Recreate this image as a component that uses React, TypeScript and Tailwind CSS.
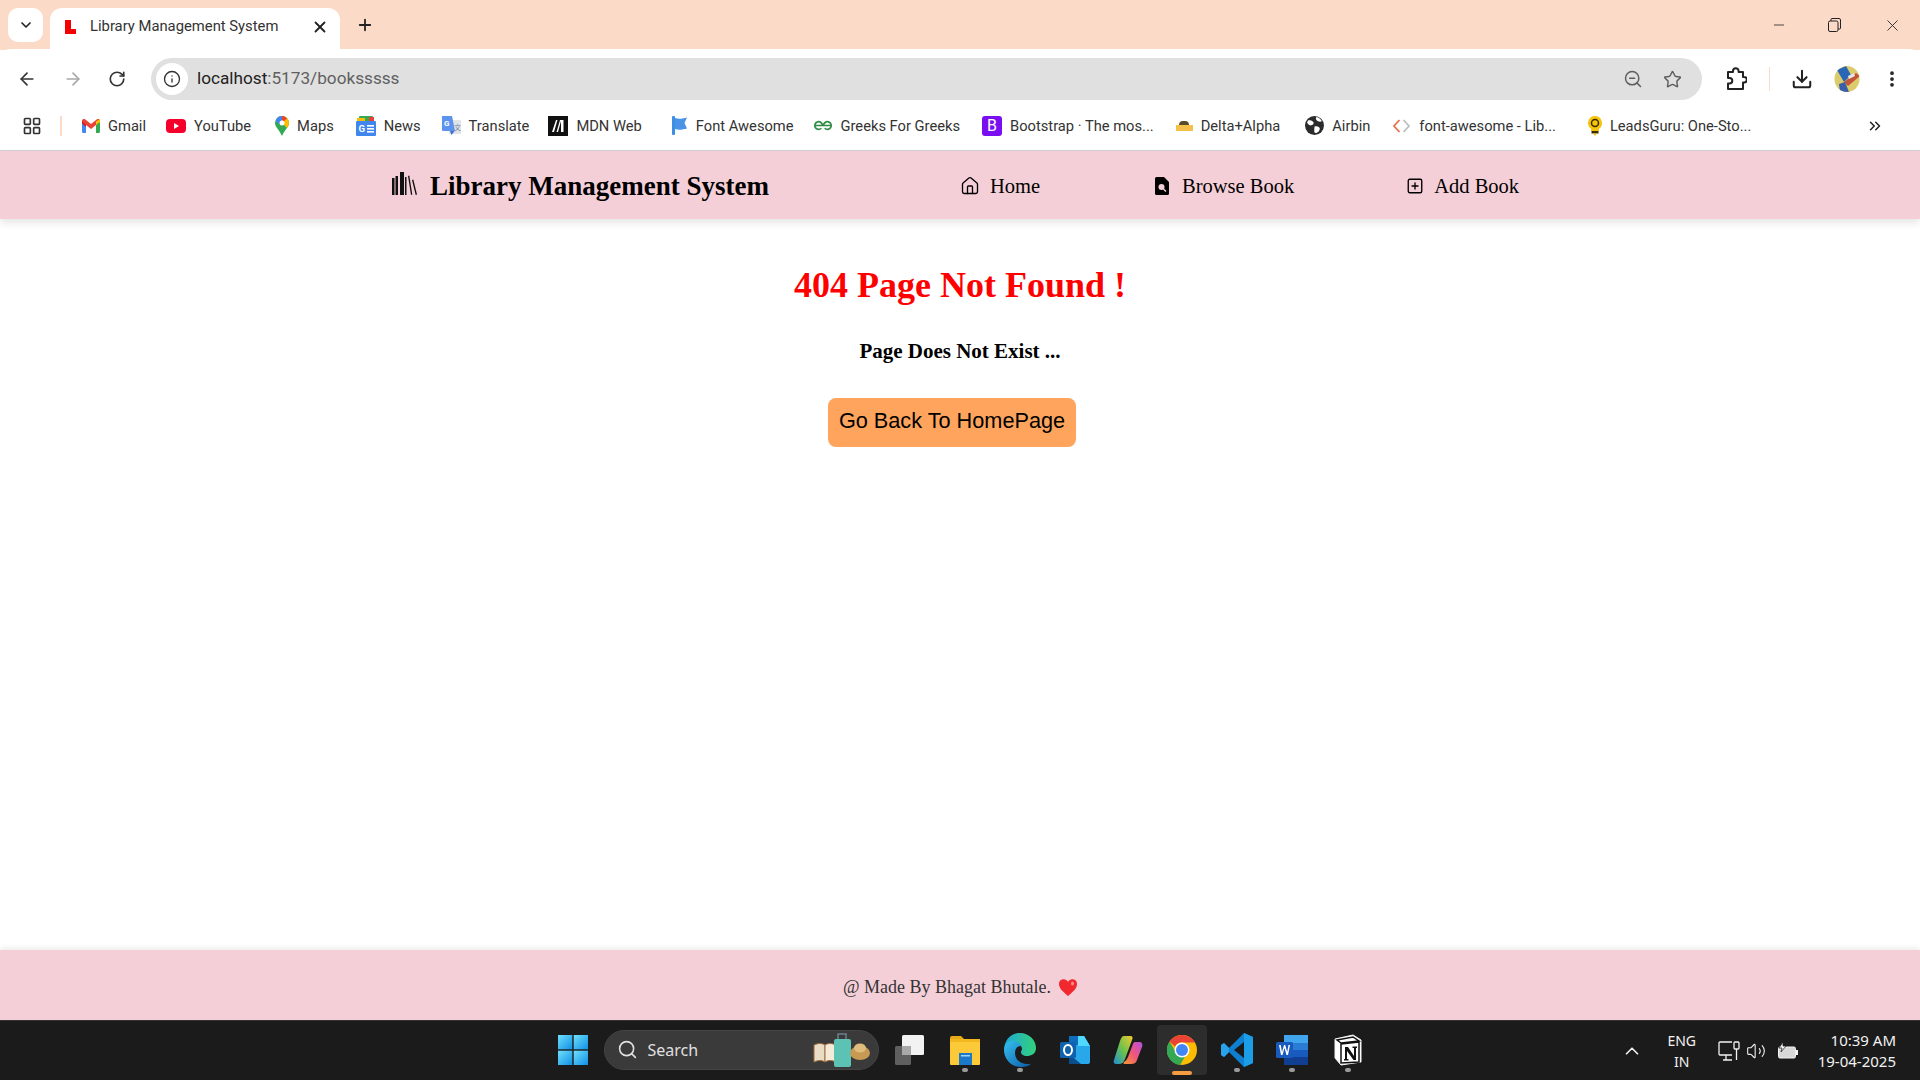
import React from "react";
import { ArrowLeft, ArrowRight, RotateCw, Info, ZoomOut, Star, Download, EllipsisVertical, X, Plus, ChevronDown, Minus, House, SquarePlus, ChevronsRight, Search, ChevronUp, Volume2, LayoutGrid } from "lucide-react";

const Gmail = () => (
  <svg width="18" height="14" viewBox="0 0 18 14"><path d="M0 2v10.5A1.5 1.5 0 0 0 1.5 14H4V6z" fill="#4285f4"/><path d="M18 2v10.5a1.5 1.5 0 0 1-1.5 1.5H14V6z" fill="#34a853"/><path d="M0 1.5 4 5v3L0 4.5z" fill="#c5221f"/><path d="M0 2C0 0 2-.5 3 .3L9 5l6-4.700C16-.5 18 0 18 2l-4 4-5 4-5-4z" fill="#ea4335"/><path d="M14 2.500 18 0v3l-4 3z" fill="#fbbc04"/></svg>
);
const YouTube = () => (
  <svg width="20" height="14" viewBox="0 0 20 14"><rect width="20" height="14" rx="4" fill="#f5002b"/><path d="M8 4l5 3-5 3z" fill="#fff"/></svg>
);
const MapsI = () => (
  <svg width="14" height="20" viewBox="0 0 14 20"><path d="M7 0a7 7 0 0 1 7 7c0 4-4.500 7-7 13C4.500 14 0 11 0 7a7 7 0 0 1 7-7z" fill="#34a853"/><path d="M2 2 12 12c1-1.500 2-3 2-5A7 7 0 0 0 7 0C5 0 3.300.8 2 2z" fill="#fbbc04"/><path d="M2 2A7 7 0 0 1 7 0v4.500L3.500 8 1 5z" fill="#4285f4"/><path d="M7 0c2 0 4 1 5 2.500L8.800 5.300 7 4z" fill="#ea4335"/><circle cx="7" cy="7" r="2.500" fill="#fff"/></svg>
);
const NewsI = () => (
  <svg width="20" height="20" viewBox="0 0 20 20"><rect x="3" y="0" width="14" height="6" rx="1" fill="#34a853"/><rect x="13" y="1" width="5" height="6" fill="#ea4335"/><rect x="1" y="2" width="8" height="4" fill="#fbbc04"/><rect x="0" y="5" width="20" height="15" rx="1" fill="#3f87ef"/><text x="2.500" y="16" fontSize="9.500" fontWeight="700" fill="#fff" fontFamily="Roboto, sans-serif">G</text><rect x="11" y="9" width="7" height="1.600" fill="#fff"/><rect x="11" y="12" width="7" height="1.600" fill="#fff"/><rect x="11" y="15" width="7" height="1.600" fill="#fff"/></svg>
);
const TranslateI = () => (
  <svg width="20" height="20" viewBox="0 0 20 20"><rect x="8" y="4" width="12" height="14" rx="1" fill="#dfe3ea"/><path d="M1 0h10l3 15H2a1 1 0 0 1-1-1z" fill="#5b93ee"/><path d="M9 15l1.500 4 3-4z" fill="#3f6fc4"/><text x="3" y="10" fontSize="8" fontWeight="700" fill="#fff" fontFamily="Roboto, sans-serif">G</text><text x="13" y="14" fontSize="7" fill="#7b8794" fontFamily="Noto Sans CJK SC, sans-serif">文</text></svg>
);
const MdnI = () => (
  <div className="w-[20px] h-[20px] bg-[#111111] flex items-center justify-center">
    <svg width="14" height="14" viewBox="0 0 14 14"><path d="M1 13 5 1h1.500L3 13zM5.500 13 9 1h1.300L7 13zM10 13V1h2.500v12z" fill="#fff"/></svg>
  </div>
);
const FontAwesomeI = () => (
  <svg width="16" height="19" viewBox="0 0 16 19"><rect x="0" y="0" width="3" height="19" rx="1" fill="#3d8fe4"/><path d="M3 2c4 1.500 8 .5 12-.5l-2.500 5.500 2.500 5.500c-4 1-8 2-12 .5z" fill="#4a94e8"/></svg>
);
const GfgI = () => (
  <svg width="20" height="11" viewBox="0 0 18 10" fill="none" stroke="#2f8d46" strokeWidth="1.500"><path d="M1 5h7.500A3.500 3.500 0 1 0 7.500 7.500"/><path d="M17 5H9.500A3.500 3.500 0 1 1 10.500 7.500"/></svg>
);
const BootstrapI = () => (
  <div className="w-[20px] h-[20px] rounded-[3px] bg-[#7a0ef0] text-white text-[16px] leading-[20px] text-center font-['Roboto',sans-serif]">B</div>
);
const DeltaI = () => (
  <div className="w-[17px] h-[12px] flex flex-col items-center justify-center">
    <div className="w-[10px] h-[4px] rounded-t-full bg-[#5a4a2a]"></div>
    <div className="w-[17px] h-[6px] bg-[#f5c04a]"></div>
  </div>
);
const AirbinI = () => (
  <svg width="19" height="19" viewBox="0 0 18 18"><circle cx="9" cy="9" r="9" fill="#2b2b2b"/><path d="M3 4c2 0 4 0 5 2S6 9 5 9 2 7 2 6zM9 10c2-1 5 0 5 2s-2 4-4 4-1-4-1-6zM11 1c2 .5 4 2 5 4-2 1-4 0-5-1s-1-2 0-3z" fill="#fff"/></svg>
);
const CodeI = () => (
  <svg width="19" height="14" viewBox="0 0 18 14" fill="none" strokeWidth="1.800"><path d="M7 1 1.500 7 7 13" stroke="#e8704a"/><path d="M11 1l5.500 6-5.500 6" stroke="#bdbdbd"/></svg>
);
const LeadsI = () => (
  <svg width="14" height="20" viewBox="0 0 14 20"><path d="M7 0a7 7 0 0 1 4 12.700V15H3v-2.300A7 7 0 0 1 7 0z" fill="#f6c40c"/><circle cx="7" cy="7" r="3.500" fill="none" stroke="#3a2c00" strokeWidth="1.500"/><rect x="3.500" y="15" width="7" height="2.500" fill="#3a2c00"/><path d="M5 17.500h4L7 20z" fill="#f6c40c"/></svg>
);
const Profile = () => (
  <svg width="26" height="26" viewBox="0 0 26 26"><clipPath id="pc"><ellipse cx="13" cy="13" rx="12.500" ry="13"/></clipPath><g clipPath="url(#pc)"><rect width="26" height="26" fill="#dccb6b"/><path d="M3 4l9-4 5 9-7 7z" fill="#2a66b8"/><path d="M10 16l12-9 4 3-12 10z" fill="#c2543b"/><path d="M5 18l6-2 4 10H6z" fill="#3b5ea8"/><path d="M14 10l6-3 1 3-6 3z" fill="#e8e6dc"/></g></svg>
);
const Extension = () => (
  <svg className="ml-[23px]" width="22" height="24" viewBox="0 0 22 24" fill="none" stroke="#222222" strokeWidth="2" strokeLinejoin="round"><path d="M3 5h5V4a2.800 2.800 0 0 1 5.600 0v1H18v5h1a2.800 2.800 0 0 1 0 5.600h-1V22H3v-5.500h1.500a2.800 2.800 0 0 0 0-5.600H3z"/></svg>
);

const Windows = () => (
  <svg width="30" height="30" viewBox="0 0 30 30"><defs><linearGradient id="wg" x1="0" y1="0" x2="1" y2="1"><stop offset="0" stopColor="#6fe0fb"/><stop offset="1" stopColor="#0f8fe6"/></linearGradient></defs><rect width="14.300" height="14.300" x="0" y="0" fill="url(#wg)"/><rect width="14.300" height="14.300" x="15.700" y="0" fill="url(#wg)"/><rect width="14.300" height="14.300" x="0" y="15.700" fill="url(#wg)"/><rect width="14.300" height="14.300" x="15.700" y="15.700" fill="url(#wg)"/></svg>
);
const SearchArt = () => (
  <svg width="58" height="34" viewBox="0 0 58 34"><path d="M1 12c4-2 8-2 11 0v17c-3-2-7-2-11 0z" fill="#e8dcc4" stroke="#a06a3c"/><path d="M23 12c-4-2-8-2-11 0v17c3-2 7-2 11 0z" fill="#f3ead8" stroke="#a06a3c"/><rect x="21" y="6" width="17" height="28" rx="2" fill="#5cc3b4"/><path d="M25 6V1h8v5" fill="none" stroke="#6e7f8c" strokeWidth="1.500"/><ellipse cx="47" cy="20" rx="10" ry="7" fill="#c69a52"/><ellipse cx="47" cy="15" rx="6" ry="4.500" fill="#e0bd7c"/></svg>
);
const TaskView = () => (
  <svg width="32" height="32" viewBox="0 0 32 32"><rect x="8" y="1" width="22" height="20" rx="1.500" fill="#f2f2f2"/><rect x="1" y="12" width="16" height="19" rx="1.500" fill="#5f5f5f"/><rect x="8" y="12" width="9" height="9" fill="#a8a8a8"/></svg>
);
const Explorer = () => (
  <svg width="32" height="30" viewBox="0 0 32 30"><path d="M1 3a2 2 0 0 1 2-2h9l3 3H1z" fill="#e8a919"/><rect x="1" y="4" width="30" height="26" rx="1" fill="#fcc938"/><rect x="1" y="4" width="30" height="3" fill="#f3b81f"/><rect x="10" y="18" width="13" height="12" fill="#1c78c8"/><rect x="12" y="20" width="9" height="1.500" fill="#9fd4f5"/></svg>
);
const Edge = () => (
  <svg width="32" height="34" viewBox="0 0 32 34"><defs><linearGradient id="eg" x1="0" y1="0" x2="1" y2="1"><stop offset="0" stopColor="#35c1f1"/><stop offset="1" stopColor="#0c59a4"/></linearGradient><linearGradient id="eg2" x1="0" y1="0" x2="1" y2="0"><stop offset="0" stopColor="#1fa8d8"/><stop offset="1" stopColor="#33d17a"/></linearGradient></defs><path d="M16 0c9 0 16 7 16 15 0 6-5 8-9 8s-6-2-6-4c0-1 1-2 1-3 0-4-5-7-10-6C2 11 0 15 0 18 0 8 6 0 16 0z" fill="url(#eg2)"/><path d="M0 17c0-5 4-9 9-9 4 0 7 2 8 5-4 0-6 3-6 7 0 6 5 11 13 11 2 0 3 0 4-1-3 3-7 4-11 4C7 34 0 26 0 17z" fill="url(#eg)"/></svg>
);
const Outlook = () => (
  <svg width="32" height="32" viewBox="0 0 32 32"><path d="M10 2h15l6 10v16a2 2 0 0 1-2 2H10z" fill="#28a8ea"/><path d="M10 2h9v9h-9z" fill="#0f6cbd"/><path d="M19 2h6l6 10-12 0z" fill="#50d9ff"/><path d="M10 20l12 10H10z" fill="#0a4d8c"/><rect x="1" y="8" width="16" height="16" rx="1.500" fill="#0f62ae"/><ellipse cx="9" cy="16" rx="4" ry="5" fill="none" stroke="#fff" strokeWidth="2"/></svg>
);
const Copilot = () => (
  <svg width="30" height="30" viewBox="0 0 30 30"><defs><linearGradient id="cg1" x1="1" y1="0" x2="0" y2="1"><stop offset="0" stopColor="#f6c731"/><stop offset=".5" stopColor="#6cc24a"/><stop offset="1" stopColor="#1e8fd8"/></linearGradient><linearGradient id="cg2" x1="1" y1="0" x2="0" y2="1"><stop offset="0" stopColor="#b44fe0"/><stop offset=".5" stopColor="#f0567a"/><stop offset="1" stopColor="#f59a30"/></linearGradient></defs><path d="M11 1h6c3 0 3 2 2 4l-7 19c-1 3-3 5-6 5H3c-2 0-3-2-2-4L7 6c1-3 2-5 4-5z" fill="url(#cg1)"/><path d="M22 7h4c3 0 4 2 3 5l-5 13c-1 3-3 4-6 4h-6c-2 0-2-1-1-2 2-1 3-3 4-5l5-13c0-1 1-2 2-2z" fill="url(#cg2)"/></svg>
);
const Chrome = () => (
  <svg width="30" height="30" viewBox="0 0 30 30"><circle cx="15" cy="15" r="15" fill="#fbbc04"/><path d="M15 0a15 15 0 0 1 13 7.500H15A7.500 7.500 0 0 0 8 11.500L2.500 6.500A15 15 0 0 1 15 0z" fill="#ea4335"/><path d="M2.500 6.500 9 17.500a7 7 0 0 0 9 4L13 30A15 15 0 0 1 2.500 6.500z" fill="#34a853"/><circle cx="15" cy="15" r="7.500" fill="#fff"/><circle cx="15" cy="15" r="6" fill="#4285f4"/></svg>
);
const VSCode = () => (
  <svg width="32" height="34" viewBox="0 0 32 34"><path d="M23 0 32 4v26l-9 4L8 19l-5 5-3-2V12l3-2 5 5z" fill="#0e7fd1"/><path d="M23 9 13 17l10 8z" fill="#1a1a1a"/><path d="M3 10l5 5 0 4-5 5-3-2V12z" fill="#29a3ec"/><path d="M23 0l9 4v26l-9 4z" fill="#1b9de8"/></svg>
);
const Word = () => (
  <svg width="32" height="30" viewBox="0 0 32 30"><rect x="8" y="0" width="24" height="30" rx="1.500" fill="#2b7cd3"/><rect x="8" y="0" width="24" height="8" fill="#41a5ee"/><rect x="8" y="15" width="24" height="8" fill="#185abd"/><rect x="8" y="22" width="24" height="8" fill="#103f91"/><rect x="0" y="7" width="17" height="16" rx="1.500" fill="#185abd"/><path d="M3 10l2 10h1.500L8.500 13l2 7H12l2-10h-1.500l-1.300 7-2-7H8l-2 7-1.300-7z" fill="#fff"/></svg>
);
const Notion = () => (
  <svg width="30" height="32" viewBox="0 0 30 32"><path d="M2 5 20 1l8 5v22l-20 3-6-7z" fill="#fff" stroke="#f5f5f5" strokeWidth="1"/><path d="M4 6 20 3l6 4-18 2zM8 10l18-2v20L8 29z" fill="#fff" stroke="#111" strokeWidth="1.500"/><path d="M12 13h3l6 9v-8h-1.500v-1.500H24V14h-1v12h-2.500L14 17v8h1.500v1.500H11V25h1z" fill="#111"/></svg>
);

const bookmarks = [
  { icon: <Gmail />, label: "Gmail", cls: "ml-[20px]" },
  { icon: <YouTube />, label: "YouTube", cls: "ml-[20px]" },
  { icon: <MapsI />, label: "Maps", cls: "ml-[24px]" },
  { icon: <NewsI />, label: "News", cls: "ml-[22px]" },
  { icon: <TranslateI />, label: "Translate", cls: "ml-[20px]" },
  { icon: <MdnI />, label: "MDN Web", cls: "ml-[19px]" },
  { icon: <FontAwesomeI />, label: "Font Awesome", cls: "ml-[30px]" },
  { icon: <GfgI />, label: "Greeks For Greeks", cls: "ml-[19px]" },
  { icon: <BootstrapI />, label: "Bootstrap · The mos...", cls: "ml-[22px]" },
  { icon: <DeltaI />, label: "Delta+Alpha", cls: "ml-[22px]" },
  { icon: <AirbinI />, label: "Airbin", cls: "ml-[25px]" },
  { icon: <CodeI />, label: "font-awesome - Lib...", cls: "ml-[22px]" },
  { icon: <LeadsI />, label: "LeadsGuru: One-Sto...", cls: "ml-[32px]" },
];

const Tray = () => (
  <div className="flex items-center justify-end text-[#f2f2f2] font-['Noto_Sans',sans-serif] pr-[24px]">
    <ChevronUp size={22} strokeWidth={1.8} />
    <div className="ml-[17px] w-[44px] text-center text-[14px] leading-[21px]"><div>ENG</div><div>IN</div></div>
    <svg className="ml-[14px]" width="22" height="22" viewBox="0 0 22 22" fill="none" stroke="#f2f2f2" strokeWidth="1.300"><path d="M14 2H2a1 1 0 0 0-1 1v11a1 1 0 0 0 1 1h12"/><path d="M5 20h9M8 15v5"/><rect x="16" y="2" width="5" height="7" rx="1"/><path d="M18.500 9v11"/></svg>
    <Volume2 className="ml-[6px]" size={20} strokeWidth={1.3} />
    <svg className="ml-[11px]" width="21" height="18" viewBox="0 0 21 18" fill="#f2f2f2"><path d="M3 5h14a1.500 1.500 0 0 1 1.500 1.500v8A1.500 1.500 0 0 1 17 16H3a1.500 1.500 0 0 1-1.500-1.500v-8A1.500 1.500 0 0 1 3 5z" fill="#d8d8d8" stroke="#f2f2f2"/><rect x="19" y="8" width="2" height="5"/><path d="M6 0 2 6h3l-1 4 5-6H6z" stroke="#1a1a1a" strokeWidth=".7"/></svg>
    <div className="ml-[20px] text-right text-[15px] leading-[21px]"><div>10:39 AM</div><div>19-04-2025</div></div>
  </div>
);

export default function App() {
  return (
    <div className="h-[1080px] w-full flex flex-col overflow-hidden bg-white">
      {/* Tab strip */}
      <div className="h-[50px] shrink-0 bg-[#fcdac8] flex font-['Roboto',sans-serif]">
        <div className="mt-[8px] ml-[8px] w-[35px] h-[34px] rounded-[10px] bg-white flex items-center justify-center text-[#222222]">
          <ChevronDown size={16} strokeWidth={2.5} />
        </div>
        <div className="ml-[7px] mt-[8px] w-[290px] h-[42px] bg-white rounded-t-[12px] flex items-center pl-[14px] pr-[11px] pb-[5px]">
          <svg width="16" height="16" viewBox="0 0 16 16"><path d="M1 1h6v9h5v5H1z" fill="#f40000"/></svg>
          <span className="ml-[10px] text-[14.800px] text-[#333333] whitespace-nowrap">Library Management System</span>
          <X className="ml-auto text-[#222222]" size={18} strokeWidth={2.4} />
        </div>
        <div className="ml-[16px] mt-[9px] h-[32px] flex items-center text-[#222222]"><Plus size={18} strokeWidth={2.4} /></div>
        <div className="ml-auto flex items-start text-[#222222]">
          <div className="w-[50px] h-[50px] flex items-center justify-center"><Minus size={16} strokeWidth={1.2} /></div>
          <div className="w-[60px] h-[50px] flex items-center justify-center">
            <svg width="13" height="14" viewBox="0 0 13 14" fill="none" stroke="#222222" strokeWidth="1"><rect x=".5" y="3" width="9.500" height="10.500" rx="1.500"/><path d="M3 3V1.500A1 1 0 0 1 4 .5h7a1.500 1.500 0 0 1 1.500 1.500v8a1 1 0 0 1-1 1H10"/></svg>
          </div>
          <div className="w-[56px] h-[50px] flex items-center justify-center"><X size={19} strokeWidth={1.1} /></div>
        </div>
      </div>
      {/* Toolbar */}
      <div className="h-[58px] shrink-0 bg-white rounded-t-[10px] -mt-px pt-[2px] flex items-center text-[#333333] font-['Roboto',sans-serif]">
        <ArrowLeft className="ml-[17px]" size={20} strokeWidth={2} />
        <ArrowRight className="ml-[26px] text-[#a8a8a8]" size={20} strokeWidth={2} />
        <RotateCw className="ml-[25px]" size={18} strokeWidth={2.2} />
        <div className="ml-[25px] w-[1551px] h-[42px] rounded-full bg-[#e0e0e0] flex items-center pl-[5px] pr-[20px]">
          <div className="w-[32px] h-[32px] rounded-full bg-white flex items-center justify-center"><Info size={18} strokeWidth={1.8} /></div>
          <span className="ml-[9px] text-[17.200px]"><span className="text-[#222222]">localhost</span><span className="text-[#5f5f5f]">:5173/booksssss</span></span>
          <ZoomOut className="ml-auto text-[#5f5f5f]" size={20} strokeWidth={1.8} />
          <Star className="ml-[20px] text-[#5f5f5f]" size={19} strokeWidth={1.8} />
        </div>
        <Extension />
        <div className="ml-[22px] w-px h-[24px] bg-[#fcdac8]"></div>
        <Download className="ml-[21px] text-[#222222]" size={22} strokeWidth={2.2} />
        <div className="ml-[21px]"><Profile /></div>
        <EllipsisVertical className="ml-[22px] text-[#222222]" size={20} strokeWidth={2.5} />
      </div>
      {/* Bookmarks */}
      <div className="h-[43px] shrink-0 bg-white pb-[5px] flex items-center text-[14.700px] text-[#333333] font-['Roboto',sans-serif]">
        <LayoutGrid className="ml-[22px]" size={20} strokeWidth={2} />
        <div className="ml-[18px] w-[2px] h-[20px] bg-[#fcdac8]"></div>
        {bookmarks.map((b) => (
          <div key={b.label} className={`flex items-center gap-[8px] whitespace-nowrap ${b.cls}`}>
            {b.icon}
            <span>{b.label}</span>
          </div>
        ))}
        <ChevronsRight className="ml-auto mr-[36px] text-[#222222]" size={18} strokeWidth={2} />
      </div>
      {/* Navbar */}
      <nav className="h-[69px] shrink-0 bg-[#f5cfd8] border-t border-[#cfcfcf] shadow-[0_4px_8px_rgba(0,0,0,0.1)] flex items-center pt-[2px] font-['Liberation_Serif',serif] text-black relative">
        <svg className="ml-[392px] -mt-[5px]" width="25" height="23" viewBox="0 0 25 23" fill="#111111"><rect x="0" y="6" width="2.500" height="17"/><rect x="3.500" y="4" width="2.500" height="19"/><rect x="8" y="0" width="4" height="23"/><rect x="13" y="5" width="1.500" height="18"/><path d="M16 4l1.300-.4 3 19-1.300.4zM20 8l1.300-.5 3.700 15-1.300.5z"/></svg>
        <span className="ml-[13px] text-[27px] font-bold whitespace-nowrap">Library Management System</span>
        <div className="ml-[191px] flex items-center text-[20.500px]">
          <House size={20} strokeWidth={1.6} />
          <span className="ml-[10px]">Home</span>
        </div>
        <div className="ml-[115px] flex items-center text-[20.500px]">
          <svg width="14" height="18" viewBox="0 0 14 18"><path d="M1.500 0H9l5 5v11.500a1.500 1.500 0 0 1-1.500 1.500h-11A1.500 1.500 0 0 1 0 16.500v-15A1.500 1.500 0 0 1 1.500 0z" fill="#000"/><circle cx="6.500" cy="10" r="3" fill="#f5cfd8"/><path d="M8.500 12l2.500 2.500" stroke="#f5cfd8" strokeWidth="1.500"/></svg>
          <span className="ml-[13px]">Browse Book</span>
        </div>
        <div className="ml-[112px] flex items-center text-[20.500px]">
          <SquarePlus size={18} strokeWidth={1.8} />
          <span className="ml-[10px]">Add Book</span>
        </div>
      </nav>
      {/* Main */}
      <main className="flex-1 flex flex-col items-center font-['Liberation_Serif',serif]">
        <h1 className="mt-[44px] text-[36px] leading-[44px] font-bold text-[#ff0000]">404 Page Not Found !</h1>
        <p className="mt-[32px] text-[21px] leading-[24px] font-bold text-black">Page Does Not Exist ...</p>
        <button className="mt-[35px] mr-[16px] w-[248px] h-[49px] rounded-[8px] bg-[#ffa45c] text-black text-[21.700px] font-['Liberation_Sans',sans-serif] pb-[2px]">Go Back To HomePage</button>
      </main>
      {/* Footer */}
      <footer className="h-[70px] shrink-0 bg-[#f5cfd8] shadow-[0_-2px_6px_rgba(0,0,0,0.08)] flex items-center justify-center gap-[8px] pt-[4px] font-['Liberation_Serif',serif] text-[18px] text-[#333333]">
        <span>@ Made By Bhagat Bhutale.</span>
        <svg width="18" height="17" viewBox="0 0 18 17"><path d="M9 17C3 12 0 9 0 5a4.800 4.800 0 0 1 9-2.300A4.800 4.800 0 0 1 18 5c0 4-3 7-9 12z" fill="#f1292e"/><ellipse cx="13.500" cy="4.500" rx="1.500" ry="2" fill="#ff8a8a"/></svg>
      </footer>
      {/* Taskbar */}
      <div className="h-[60px] shrink-0 bg-[#1b1b1b] border-t border-[#333333] grid grid-cols-[1fr_auto_1fr] items-center">
        <div></div>
        <div className="flex items-center font-['Noto_Sans',sans-serif] -mt-[2px]">
          <Windows />
          <div className="ml-[16px] w-[275px] h-[40px] rounded-full bg-[#3a3a3a] border border-[#444444] flex items-center pl-[12px] pr-[7px] text-[#e0e0e0]">
            <Search size={21} strokeWidth={1.8} />
            <span className="ml-[10px] text-[16px]">Search</span>
            <div className="ml-auto"><SearchArt /></div>
          </div>
          <div className="ml-[15px]"><TaskView /></div>
          <div className="ml-[23px] relative"><Explorer /><span className="absolute -bottom-[7px] left-[13px] w-[6px] h-[4px] rounded-full bg-[#9a9a9a]"></span></div>
          <div className="ml-[23px] relative"><Edge /><span className="absolute -bottom-[5px] left-[13px] w-[6px] h-[4px] rounded-full bg-[#9a9a9a]"></span></div>
          <div className="ml-[23px]"><Outlook /></div>
          <div className="ml-[22px]"><Copilot /></div>
          <div className="ml-[14px] w-[50px] h-[50px] rounded-[4px] bg-[#2d2d2d] flex items-center justify-center relative"><Chrome /><span className="absolute bottom-0 left-[15px] w-[20px] h-[4px] rounded-full bg-[#f59b42]"></span></div>
          <div className="ml-[14px] relative"><VSCode /><span className="absolute -bottom-[5px] left-[13px] w-[6px] h-[4px] rounded-full bg-[#9a9a9a]"></span></div>
          <div className="ml-[23px] relative"><Word /><span className="absolute -bottom-[7px] left-[13px] w-[6px] h-[4px] rounded-full bg-[#9a9a9a]"></span></div>
          <div className="ml-[25px] relative"><Notion /><span className="absolute -bottom-[6px] left-[12px] w-[6px] h-[4px] rounded-full bg-[#9a9a9a]"></span></div>
        </div>
        <Tray />
      </div>
    </div>
  );
}
